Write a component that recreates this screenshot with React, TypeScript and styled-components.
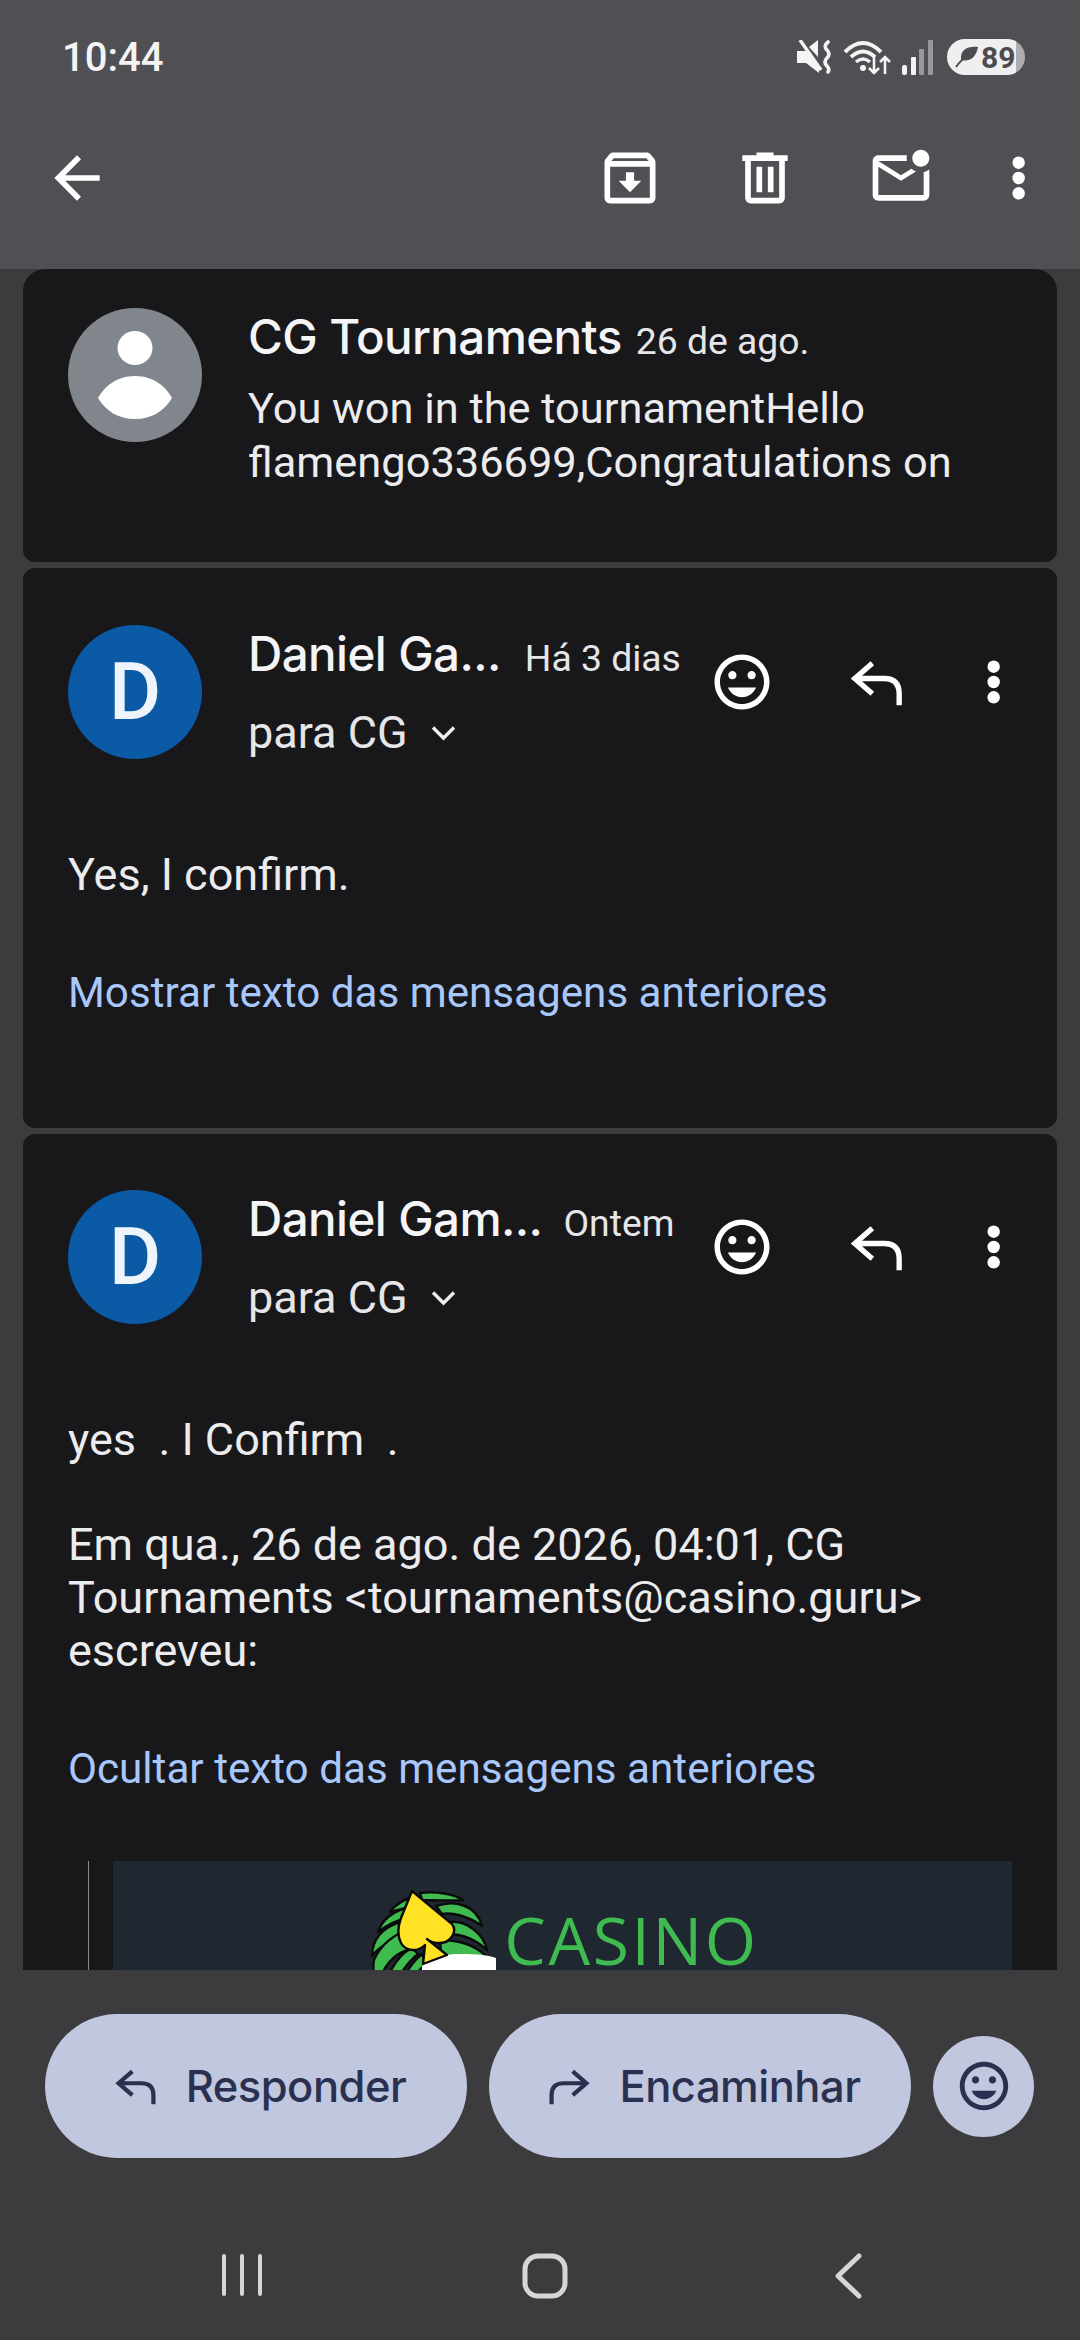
import styled, { createGlobalStyle } from 'styled-components';

const GlobalStyle = createGlobalStyle`
  html, body {
    margin: 0;
    padding: 0;
    background: #3c3c3e;
  }
  * {
    box-sizing: border-box;
  }
`;

const Page = styled.div`
  width: 1080px;
  height: 2340px;
  display: flex;
  flex-direction: column;
  overflow: hidden;
  background: #3c3c3e;
  color: #f1f1f3;
  font-family: Roboto, 'Liberation Sans', sans-serif;
`;

const TopBar = styled.header`
  height: 269px;
  flex-shrink: 0;
  background: #4f4f54;
`;

const StatusRow = styled.div`
  height: 112px;
  display: flex;
  align-items: center;
  justify-content: space-between;
  padding: 2px 55px 0 62px;
`;

const Clock = styled.span`
  font-size: 40px;
  font-weight: 500;
  color: #f4f4f4;
`;

const StatusIcons = styled.div`
  display: flex;
  align-items: center;
  gap: 10px;
`;

const Battery = styled.div`
  width: 78px;
  height: 36px;
  margin-left: 3px;
  border-radius: 18px;
  display: flex;
  align-items: center;
  padding-left: 8px;
  gap: 2px;
  background: linear-gradient(90deg, #efeff0 0 88%, #aeaeb0 88% 100%);
  color: #4c4c50;
  font-size: 30px;
  font-weight: 700;
`;

const ToolRow = styled.div`
  height: 132px;
  display: flex;
  align-items: center;
  padding: 0 11px 0 43px;
`;

const ToolSpacer = styled.div`
  flex: 1;
`;

const ToolIcon = styled.span<{ $width: number }>`
  width: ${(p) => p.$width}px;
  display: flex;
  justify-content: center;
`;

const ThreadList = styled.main`
  flex: 1;
  min-height: 0;
  margin: 0 23px;
  display: flex;
  flex-direction: column;
  gap: 6px;
  overflow: hidden;
  border-radius: 22px 22px 0 0;
`;

const Card = styled.section<{ $top: number; $height?: number }>`
  flex-shrink: 0;
  height: ${(p) => (p.$height ? `${p.$height}px` : 'auto')};
  padding: ${(p) => p.$top}px 45px 0;
  background: #18181b;
  border-radius: 12px;
`;

const MessageHead = styled.div`
  display: flex;
  align-items: flex-start;
`;

const Avatar = styled.div<{ $color: string }>`
  width: 134px;
  height: 134px;
  flex-shrink: 0;
  border-radius: 50%;
  background: ${(p) => p.$color};
  color: #eef4fb;
  display: flex;
  align-items: center;
  justify-content: center;
  font-size: 80px;
  font-weight: 500;
`;

const Meta = styled.div`
  width: 426px;
  margin-left: 46px;
  flex-shrink: 0;
`;

const NameRow = styled.div<{ $gap: number }>`
  display: flex;
  align-items: baseline;
  gap: ${(p) => p.$gap}px;
  white-space: nowrap;
  height: 54px;
`;

const SenderName = styled.span`
  font-family: Inter, 'Open Sans', sans-serif;
  font-size: 47.5px;
  font-weight: 500;
  color: #f5f5f7;
  letter-spacing: -0.6px;
`;

const DateText = styled.span`
  font-size: 37.3px;
  color: #e6e6e8;
`;

const Snippet = styled.p`
  margin: 20px 0 0;
  width: 720px;
  font-size: 43.4px;
  line-height: 54px;
  color: #ececee;
`;

const Recipient = styled.div`
  display: flex;
  align-items: center;
  gap: 23px;
  margin-top: 27px;
  font-size: 45px;
  line-height: 54px;
  color: #e6e6e8;
`;

const Actions = styled.div`
  display: flex;
  align-items: center;
  margin: 24px 0 0 1px;
`;

const ActionIcon = styled.span<{ $width: number }>`
  width: ${(p) => p.$width}px;
  display: flex;
  justify-content: center;
`;

const BodyText = styled.p<{ $top: number }>`
  margin: ${(p) => p.$top}px 0 0;
  font-size: 45px;
  line-height: 53px;
  color: #ececee;
  white-space: pre-wrap;
`;

const QuoteToggle = styled.a<{ $top: number }>`
  display: block;
  margin-top: ${(p) => p.$top}px;
  font-size: 42.2px;
  line-height: 53px;
  color: #a8c7fa;
`;

const Quote = styled.blockquote`
  margin: 66px 0 0 20px;
  padding-left: 24px;
  border-left: 1px solid #8a8a8e;
`;

const Banner = styled.div`
  height: 260px;
  padding: 27px 0 0 4px;
  background: #1f2830;
  display: flex;
  justify-content: center;
  align-items: flex-start;
`;

const LogoText = styled.span`
  margin: 27px 0 0 4px;
  font-family: 'Open Sans', sans-serif;
  font-size: 66px;
  font-weight: 500;
  line-height: 48px;
  letter-spacing: 2.6px;
  color: #3fbb4f;
`;

const BottomBar = styled.footer`
  height: 370px;
  flex-shrink: 0;
  background: #3c3c3e;
`;

const ButtonRow = styled.div`
  display: flex;
  align-items: center;
  gap: 22px;
  padding: 44px 45px 0;
`;

const PillButton = styled.button`
  width: 422px;
  height: 144px;
  padding: 0 0 0 8px;
  border: none;
  border-radius: 72px;
  background: #c0c7de;
  color: #2a3150;
  display: flex;
  align-items: center;
  justify-content: center;
  gap: 28px;
  font-family: Inter, 'Open Sans', sans-serif;
  font-size: 43.5px;
  font-weight: 500;
  letter-spacing: -0.5px;
`;

const RoundButton = styled.button`
  width: 101px;
  height: 101px;
  padding: 0;
  border: none;
  border-radius: 50%;
  background: #c0c7de;
  display: flex;
  align-items: center;
  justify-content: center;
`;

const NavBar = styled.nav`
  margin-top: 95px;
  padding-left: 10px;
  display: flex;
  justify-content: center;
`;

const NavSlot = styled.span`
  width: 303px;
  display: flex;
  justify-content: center;
`;

const MOOD =
  'M11.99 2C6.47 2 2 6.48 2 12s4.47 10 9.99 10C17.52 22 22 17.52 22 12S17.52 2 11.99 2zM12 20c-4.42 0-8-3.58-8-8s3.58-8 8-8 8 3.58 8 8-3.58 8-8 8zm3.5-9c.83 0 1.5-.67 1.5-1.5S16.33 8 15.5 8 14 8.67 14 9.5s.67 1.5 1.5 1.5zm-7 0c.83 0 1.5-.67 1.5-1.5S9.33 8 8.5 8 7 8.67 7 9.5 7.67 11 8.5 11zm3.5 6.5c2.33 0 4.31-1.46 5.11-3.5H6.89c.8 2.04 2.78 3.5 5.11 3.5z';

const Glyph = ({ d, size, color = '#fff' }: { d: string; size: number; color?: string }) => (
  <svg width={size} height={size} viewBox="0 0 24 24" fill={color}>
    <path d={d} />
  </svg>
);

const ReplyArrow = ({ width, color, flip }: { width: number; color: string; flip?: boolean }) => (
  <svg width={width} height={width} viewBox="0 0 24 24" fill="none" stroke={color} strokeWidth="2.3">
    <path
      d="M10 4 L2.5 10.5 L10 17 M2.5 10.5 H15 Q21.5 10.5 21.5 17 V22"
      transform={flip ? 'matrix(-1 0 0 1 24 0)' : undefined}
    />
  </svg>
);

const Dots = ({ height }: { height: number }) => (
  <svg width={height / 3} height={height} viewBox="0 0 16 46" fill="#fff">
    <circle cx="8" cy="7" r="6.5" />
    <circle cx="8" cy="23" r="6.5" />
    <circle cx="8" cy="39" r="6.5" />
  </svg>
);

const Chevron = () => (
  <svg width="25" height="16" viewBox="0 0 25 16" fill="none" stroke="#eee" strokeWidth="3.4">
    <path d="M2 2.5 L12.5 13 L23 2.5" />
  </svg>
);

const MutedIcon = () => (
  <svg width="36" height="34" viewBox="0 0 36 34" fill="#f4f4f4">
    <path d="M0 11 H8 L9 10 L22 26 V33 L9 23 H0 Z M12 7 L21 0 V17 Z" />
    <path d="M3 1 L25 31" stroke="#4f4f54" strokeWidth="2" />
    <path d="M3 0 L24 30" stroke="#f4f4f4" strokeWidth="3.4" />
    <path
      d="M31 2 Q26 6 30 10 Q34 14 30 18 Q26 22 30 26 Q33 29 31 32"
      fill="none"
      stroke="#f4f4f4"
      strokeWidth="3.6"
      strokeLinecap="round"
    />
  </svg>
);

const WifiIcon = () => (
  <svg width="48" height="36" viewBox="0 0 48 36" fill="none" stroke="#f4f4f4">
    <path d="M2 13 Q20 -5 38 13" strokeWidth="4" />
    <path d="M8 18 Q20 7 32 18" strokeWidth="4" />
    <path d="M13 23 Q20 17 27 23" strokeWidth="3.6" />
    <circle cx="20" cy="29" r="3" fill="#f4f4f4" stroke="none" />
    <path d="M31 17 V34 M26 29 L31 34 L36 29" strokeWidth="2.6" />
    <path d="M42 35 V18 M37 23 L42 18 L47 23" strokeWidth="2.6" />
  </svg>
);

const SignalIcon = () => (
  <svg width="33" height="35" viewBox="0 0 33 35">
    <rect x="1" y="25" width="5" height="10" rx="2" fill="#f4f4f4" />
    <rect x="10" y="17" width="5" height="18" rx="1" fill="#f4f4f4" />
    <rect x="18" y="9" width="5" height="26" rx="1" fill="#98989b" />
    <rect x="27" y="0" width="5" height="35" rx="1" fill="#98989b" />
  </svg>
);

const LeafIcon = () => (
  <svg width="24" height="22" viewBox="0 0 24 22" fill="#4c4c50">
    <path d="M23 1 C12 0 5 4 6 14 C14 16 21 12 23 1 Z" />
    <path d="M1 21 C5 15 9 12 14 9" fill="none" stroke="#4c4c50" strokeWidth="2" />
  </svg>
);

const PersonIcon = () => (
  <svg width="74" height="88" viewBox="0 0 74 88" fill="#fff">
    <ellipse cx="37" cy="17" rx="17.5" ry="17" />
    <path d="M37 45 C56 45 68 56 74 67 C66 80 54 88 37 88 C20 88 8 80 0 67 C6 56 18 45 37 45 Z" />
  </svg>
);

const CasinoMark = () => (
  <svg width="130" height="110" viewBox="0 0 130 110" stroke="#0b0b0b" strokeWidth="2.4" strokeLinejoin="round">
    <g fill="#3fbb4f">
      <path d="M2 68 C2 52 12 40 30 34 L34 48 C20 52 8 60 2 68 Z" />
      <path d="M8 44 C12 32 22 24 36 20 L38 30 C26 32 16 38 8 44 Z" />
      <path d="M20 24 C26 16 34 11 44 9 L44 19 C36 19 28 22 20 24 Z" />
      <path d="M50 5 C66 3 84 6 93 12 C80 13 62 12 52 12 Z" />
      <path d="M66 18 C84 12 106 16 112 38 C98 28 82 24 72 26 Z" />
      <path d="M80 34 C96 32 114 46 117 62 C106 52 92 46 78 46 Z" />
      <path d="M70 52 C86 52 104 56 116 68 L112 78 H72 Z" />
      <path d="M4 72 C10 58 20 50 32 44 L38 62 C24 66 12 78 8 100 C4 90 2 82 4 72 Z" />
      <path d="M14 100 C20 80 30 66 42 60 L48 66 C38 74 28 88 24 100 Z" />
      <path d="M30 100 C34 88 42 74 52 66 L56 76 C48 82 42 92 38 100 Z" />
    </g>
    <path d="M52 78 C58 70 70 67 86 66 C100 66 116 66 126 70 V110 H52 Z" fill="#fff" stroke="none" />
    <path
      d="M42 3 L82 36 C88 44 80 55 70 55 C65 55 60 54 57 51 L77 67 L53 76 L55 57 C48 64 36 64 31 55 C27 47 28 38 31 30 Z"
      fill="#ffe224"
    />
  </svg>
);

const App = () => {
  return (
    <Page>
      <GlobalStyle />
      <TopBar>
        <StatusRow>
          <Clock>10:44</Clock>
          <StatusIcons>
            <MutedIcon />
            <WifiIcon />
            <SignalIcon />
            <Battery>
              <LeafIcon />
              89
            </Battery>
          </StatusIcons>
        </StatusRow>
        <ToolRow>
          <Glyph d="M20 11H7.83l5.59-5.59L12 4l-8 8 8 8 1.41-1.41L7.83 13H20v-2z" size={68} />
          <ToolSpacer />
          <ToolIcon $width={135}>
            <Glyph
              d="M20.54 5.23l-1.39-1.68C18.88 3.21 18.47 3 18 3H6c-.47 0-.88.21-1.16.55L3.46 5.23C3.17 5.57 3 6.02 3 6.5V19c0 1.1.9 2 2 2h14c1.1 0 2-.9 2-2V6.5c0-.48-.17-.93-.46-1.27zM6.24 5h11.52l.81.97H5.44l.8-.97zM5 19V8h14v11H5zm8.45-9h-2.9v3H8l4 4 4-4h-2.55z"
              size={68}
            />
          </ToolIcon>
          <ToolIcon $width={136}>
            <Glyph
              d="M15 4V3H9v1H4v2h1v13c0 1.1.9 2 2 2h10c1.1 0 2-.9 2-2V6h1V4h-5zm2 15H7V6h10v13zM9 8h2v9H9zm4 0h2v9h-2z"
              size={68}
            />
          </ToolIcon>
          <ToolIcon $width={136}>
            <Glyph
              d="M22 8.98V18c0 1.1-.9 2-2 2H4c-1.1 0-2-.9-2-2V6c0-1.1.9-2 2-2h10.1c-.06.32-.1.66-.1 1s.04.68.1 1H4l8 5 3.67-2.29c.47.43 1.02.76 1.63.98L12 13 4 8v10h16V9.9c.74-.15 1.42-.48 2-.92zM16 5c0 1.66 1.34 3 3 3s3-1.34 3-3-1.34-3-3-3-3 1.34-3 3z"
              size={68}
            />
          </ToolIcon>
          <ToolIcon $width={100}>
            <Dots height={46} />
          </ToolIcon>
        </ToolRow>
      </TopBar>

      <ThreadList>
        <Card $top={39} $height={293}>
          <MessageHead>
            <Avatar $color="#80868b">
              <PersonIcon />
            </Avatar>
            <Meta>
              <NameRow $gap={14}>
                <SenderName>CG Tournaments</SenderName>
                <DateText>26 de ago.</DateText>
              </NameRow>
              <Snippet>
                You won in the tournamentHello
                <br />
                flamengo336699,Congratulations on
              </Snippet>
            </Meta>
          </MessageHead>
        </Card>

        <Card $top={57} $height={560}>
          <MessageHead>
            <Avatar $color="#0b5aa5">D</Avatar>
            <Meta>
              <NameRow $gap={24}>
                <SenderName>Daniel Ga...</SenderName>
                <DateText>Há 3 dias</DateText>
              </NameRow>
              <Recipient>
                para CG
                <Chevron />
              </Recipient>
            </Meta>
            <Actions>
              <ActionIcon $width={134}>
                <Glyph d={MOOD} size={66} />
              </ActionIcon>
              <ActionIcon $width={136}>
                <ReplyArrow width={56} color="#fff" />
              </ActionIcon>
              <ActionIcon $width={98}>
                <Dots height={46} />
              </ActionIcon>
            </Actions>
          </MessageHead>
          <BodyText $top={88}>Yes, I confirm.</BodyText>
          <QuoteToggle $top={65}>Mostrar texto das mensagens anteriores</QuoteToggle>
        </Card>

        <Card $top={56}>
          <MessageHead>
            <Avatar $color="#0b5aa5">D</Avatar>
            <Meta>
              <NameRow $gap={21}>
                <SenderName>Daniel Gam...</SenderName>
                <DateText>Ontem</DateText>
              </NameRow>
              <Recipient>
                para CG
                <Chevron />
              </Recipient>
            </Meta>
            <Actions>
              <ActionIcon $width={134}>
                <Glyph d={MOOD} size={66} />
              </ActionIcon>
              <ActionIcon $width={136}>
                <ReplyArrow width={56} color="#fff" />
              </ActionIcon>
              <ActionIcon $width={98}>
                <Dots height={46} />
              </ActionIcon>
            </Actions>
          </MessageHead>
          <BodyText $top={88}>yes  . I Confirm  .</BodyText>
          <BodyText $top={52}>
            Em qua., 26 de ago. de 2026, 04:01, CG
            <br />
            Tournaments &lt;tournaments@casino.guru&gt;
            <br />
            escreveu:
          </BodyText>
          <QuoteToggle $top={65}>Ocultar texto das mensagens anteriores</QuoteToggle>
          <Quote>
            <Banner>
              <CasinoMark />
              <LogoText>CASINO</LogoText>
            </Banner>
          </Quote>
        </Card>
      </ThreadList>

      <BottomBar>
        <ButtonRow>
          <PillButton>
            <ReplyArrow width={44} color="#2a3150" />
            Responder
          </PillButton>
          <PillButton>
            <ReplyArrow width={44} color="#2a3150" flip />
            Encaminhar
          </PillButton>
          <RoundButton>
            <Glyph d={MOOD} size={58} color="#2a3150" />
          </RoundButton>
        </ButtonRow>
        <NavBar>
          <NavSlot>
            <svg width="40" height="44" viewBox="0 0 40 44" fill="#d6d6d8">
              <rect x="0" y="1" width="4" height="42" rx="2" />
              <rect x="18" y="1" width="4" height="42" rx="2" />
              <rect x="36" y="1" width="4" height="42" rx="2" />
            </svg>
          </NavSlot>
          <NavSlot>
            <svg width="46" height="46" viewBox="0 0 46 46" fill="none" stroke="#d6d6d8" strokeWidth="5">
              <rect x="3" y="3" width="40" height="40" rx="13" />
            </svg>
          </NavSlot>
          <NavSlot>
            <svg width="28" height="46" viewBox="0 0 28 46" fill="none" stroke="#d6d6d8" strokeWidth="5" strokeLinecap="round" strokeLinejoin="round">
              <path d="M25 3 L4 23 L25 43" />
            </svg>
          </NavSlot>
        </NavBar>
      </BottomBar>
    </Page>
  );
};

export default App;
